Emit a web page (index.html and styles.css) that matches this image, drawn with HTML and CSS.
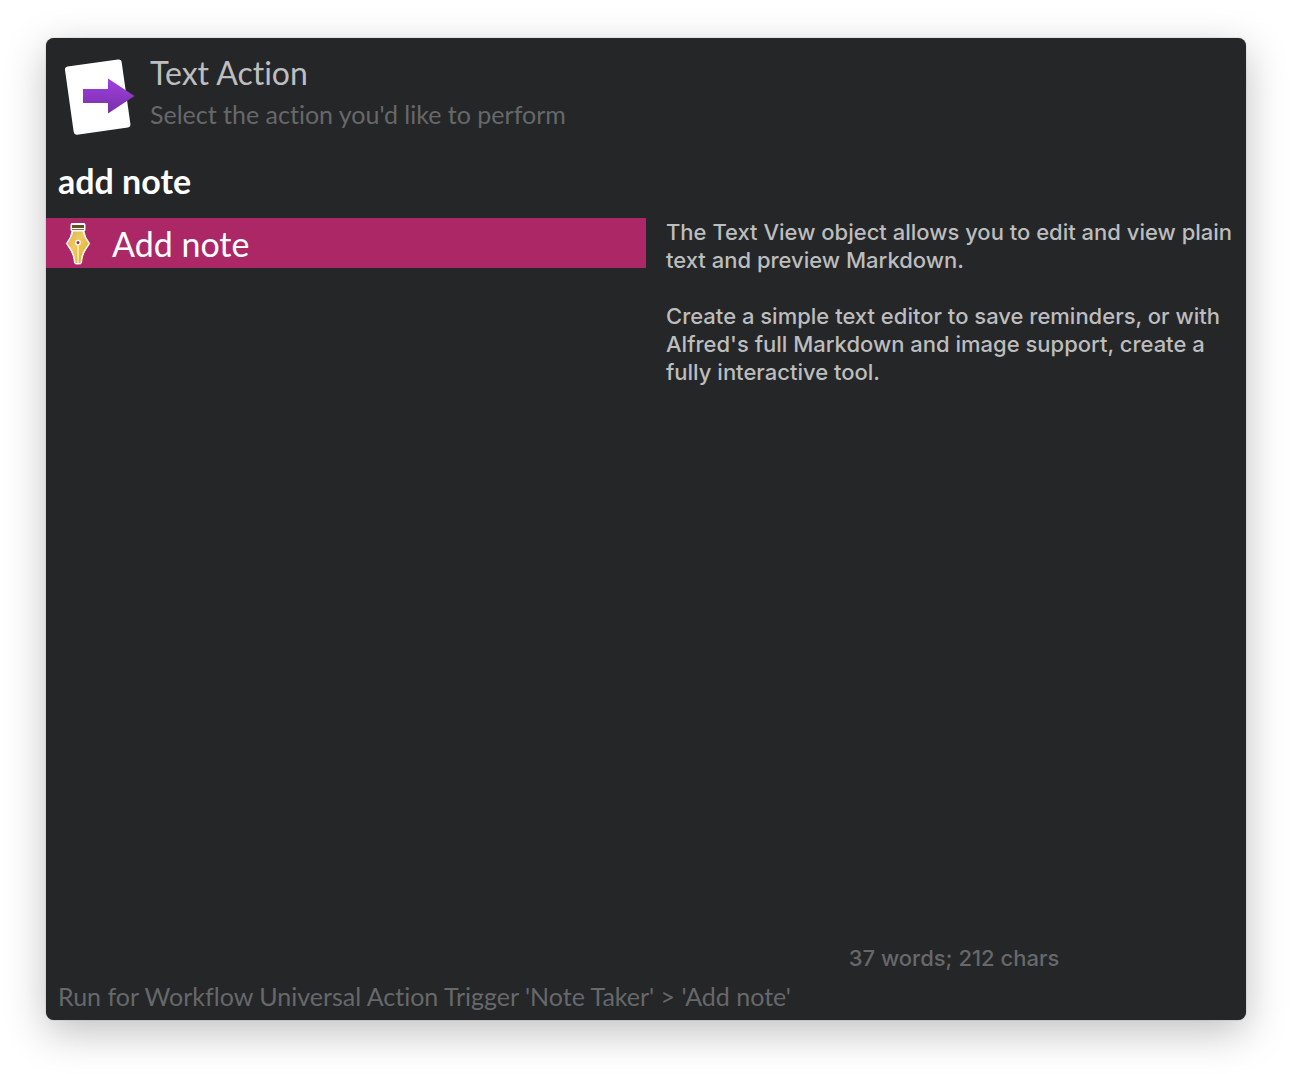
FILE: index.html
```html
<!DOCTYPE html>
<html lang="en">
<head>
<meta charset="utf-8">
<meta name="viewport" content="width=device-width, initial-scale=1">
<title>Text Action</title>
<link rel="stylesheet" href="styles.css">
</head>
<body>
<main class="panel">
  <header class="header">
    <svg class="header-icon" viewBox="0 0 72 78" aria-hidden="true">
      <defs>
        <linearGradient id="arrow" x1="0" y1="0" x2="0" y2="1">
          <stop offset="0" stop-color="#a040e2"/>
          <stop offset="1" stop-color="#7730a6"/>
        </linearGradient>
      </defs>
      <path d="M3.500 8.500 54 1.600Q57.300 1.200 57.700 4.400L66.400 66Q66.800 69 63.800 69.500L13.200 76.700Q10.200 77.100 9.700 74.100L1 12Q.600 9 3.500 8.500Z" fill="#fff"/>
      <path d="M19 31H44V20.500L70.500 38 44 55.500V45H19Z" fill="url(#arrow)"/>
    </svg>
    <div class="heading">
      <h1 class="title">Text Action</h1>
      <p class="subtitle">Select the action you'd like to perform</p>
    </div>
  </header>

  <input class="query" type="text" value="add note" aria-label="Filter actions">

  <div class="content">
    <div class="results">
      <button class="result" type="button">
        <svg class="result-icon" viewBox="0 0 28 44" aria-hidden="true">
          <defs>
            <linearGradient id="gold" x1="0" y1="0" x2="1" y2="1">
              <stop offset="0" stop-color="#dcae48"/>
              <stop offset=".4" stop-color="#eecb62"/>
              <stop offset="1" stop-color="#dfaa17"/>
            </linearGradient>
          </defs>
          <path d="M7 3.500Q7 2.500 8 2.500H20Q21 2.500 21 3.500V9.500H19.800Q20.500 16 25.600 22.500C22 29 18.500 31 17.500 42Q17.500 43 14 43T10.500 42C9.500 31 6 29 2.400 22.500Q7.500 16 8.200 9.500H7Z" fill="#fff" stroke="#fff" stroke-width="1"/>
          <path d="M8 4H20V7H8Z" fill="#675024"/>
          <path d="M8 8.500H20" stroke="#8a7040" stroke-width="1"/>
          <path d="M9.300 10.500H18.700Q19.600 16 24.600 22.500C21 28 17.300 31 16.500 42H11.500C10.700 31 7 28 3.400 22.500Q8.400 16 9.300 10.500Z" fill="url(#gold)"/>
          <path d="M14 24V42" stroke="#fff" stroke-width="1"/>
          <circle cx="14" cy="21.500" r="2.200" fill="#a8294f" stroke="#fff" stroke-width="1.300"/>
        </svg>
        <span>Add note</span>
      </button>
    </div>
    <section class="preview" aria-label="Text preview">
      <div class="preview-text">
        <p>The Text View object allows you to edit and view plain text and preview Markdown.</p>
        <p>Create a simple text editor to save reminders, or with Alfred's full Markdown and image support, create a fully interactive tool.</p>
      </div>
      <p class="count">37 words; 212 chars</p>
    </section>
  </div>

  <footer class="status">Run for Workflow Universal Action Trigger 'Note Taker' &gt; 'Add note'</footer>
</main>
</body>
</html>
```
FILE: styles.css
```css
* {
  box-sizing: border-box;
}

body {
  display: flex;
  min-height: 100vh;
  margin: 0;
  padding: 38px 46px 54px;
  background: #fff;
  font-family: Lato, "Open Sans", sans-serif;
  font-variant-ligatures: none;
}

h1,
p {
  margin: 0;
  font-weight: 400;
}

.panel {
  display: flex;
  flex: 1;
  flex-direction: column;
  min-width: 0;
  border-radius: 8px;
  background: #242628;
  box-shadow: 0 0 1px rgba(0, 0, 0, 0.6), 0 12px 40px rgba(0, 0, 0, 0.25);
}

.header {
  display: flex;
  gap: 14px;
  padding: 20px 18px 16px;
}

.header-icon {
  flex: none;
  width: 72px;
  height: 78px;
}

.heading {
  margin-top: -6px;
}

.title {
  color: #bebebf;
  font-size: 32px;
  line-height: 42px;
}

.subtitle {
  color: #67686a;
  font-size: 25px;
  line-height: 40px;
}

.query {
  width: 100%;
  height: 66px;
  padding: 0 12px 10px;
  border: 0;
  outline: 0;
  background: transparent;
  color: #fff;
  font: 700 34px Lato, "Open Sans", sans-serif;
}

.content {
  display: grid;
  flex: 1;
  grid-template-columns: 1fr 1fr;
}

.result {
  display: flex;
  align-items: center;
  gap: 20px;
  width: 100%;
  height: 50px;
  padding: 0 18px;
  border: 0;
  background: #ac2765;
  color: #fff;
  font: 400 34px Lato, "Open Sans", sans-serif;
}

.result-icon {
  flex: none;
  width: 28px;
  height: 44px;
}

.preview {
  display: flex;
  flex-direction: column;
  justify-content: space-between;
  gap: 28px;
  padding-bottom: 4px;
  font-family: Inter, "Noto Sans", sans-serif;
  font-size: 22px;
  font-weight: 500;
  line-height: 28px;
}

.preview-text {
  display: grid;
  gap: 28px;
  padding: 0 12px 0 20px;
  color: #bcbdbe;
}

.preview p {
  font-weight: inherit;
}

.count {
  padding: 0 8px 0 24px;
  color: #67686a;
  text-align: center;
}

.status {
  padding: 0 12px 4px;
  color: #67686a;
  font-size: 25px;
  line-height: 40px;
}
```
